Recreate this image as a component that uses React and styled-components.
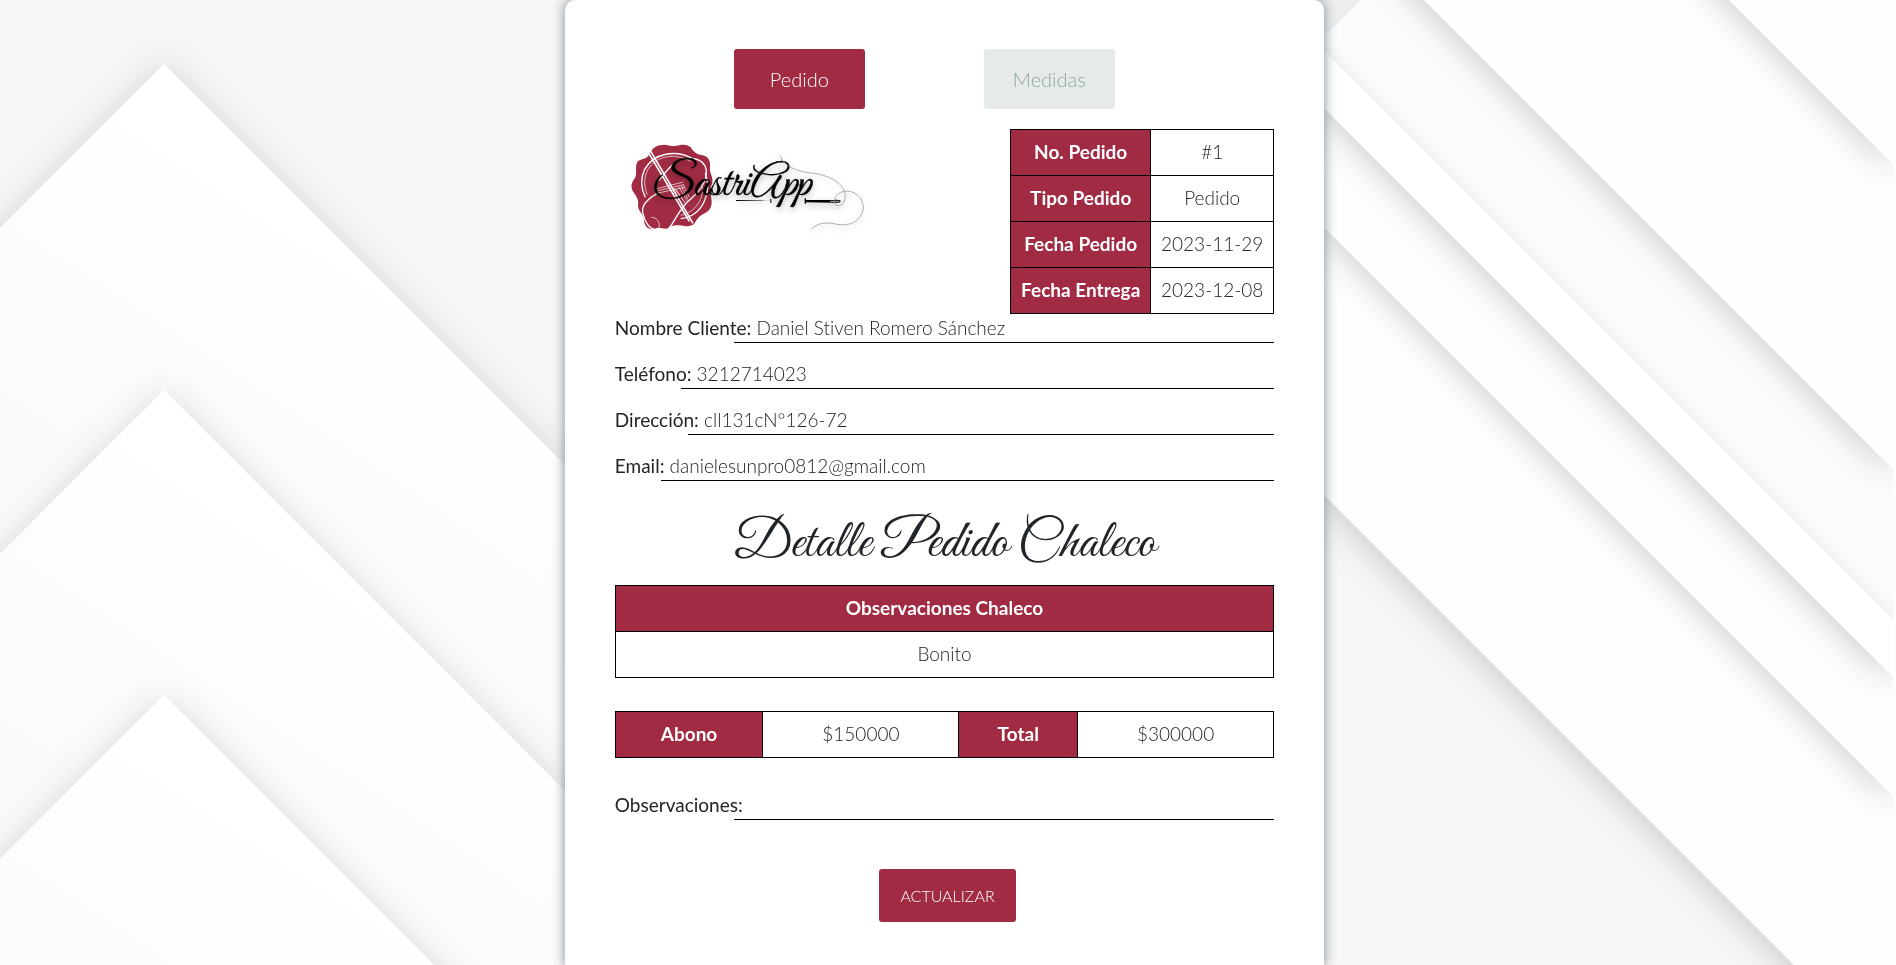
import React from "react";
import styled, { createGlobalStyle } from "styled-components";

const wine = "#a02b42";
const sans = `Lato, "Liberation Sans", sans-serif`;
const script = `"Great Vibes", "Petit Formal Script", cursive`;

const GlobalStyle = createGlobalStyle`
  *, *::before, *::after { box-sizing: border-box; }
  body {
    margin: 0;
    background: #f6f6f6;
    color: #212529;
    font: 300 19px/27px ${sans};
    font-variant-ligatures: none;
  }
`;

const Page = styled.div`
  min-height: 100vh;
  display: flex;
  justify-content: center;
  padding-right: 7px;
`;

const Backdrop = styled.svg`
  position: fixed;
  inset: 0;
  width: 100%;
  height: 100%;
  z-index: -1;
`;

const Card = styled.main`
  width: 40.2%;
  min-width: 600px;
  padding: 49px 50px 42px;
  background: #fff;
  border-radius: 10px 10px 0 0;
  box-shadow: 0 0 12px 1px #8e979f;
`;

const Tabs = styled.nav`
  display: flex;
  gap: 119px;
  padding-left: 119px;
  margin-bottom: 20px;
`;

const Tab = styled.button`
  width: 131px;
  height: 60px;
  border: 0;
  border-radius: 3px;
  font: 300 20px/29px ${sans};
  color: ${(p) => (p.$active ? "#fff" : "#8fa5a4")};
  background: ${(p) => (p.$active ? wine : "#e6eae9")};
`;

const Header = styled.header`
  display: flex;
  justify-content: space-between;
  align-items: flex-start;
`;

const Logo = styled.svg`
  width: 250px;
  height: 110px;
`;

const Table = styled.table`
  width: ${(p) => p.$width || "100%"};
  margin-bottom: ${(p) => p.$gap || "0"};
  border-collapse: collapse;
  table-layout: fixed;
  text-align: center;
`;

const HeadCell = styled.th`
  width: ${(p) => p.$width || "auto"};
  padding: 8px 0 10px;
  border: 1px solid #000;
  background: ${wine};
  color: #fff;
  font-weight: 700;
`;

const Cell = styled.td`
  width: ${(p) => p.$width || "auto"};
  padding: 8px 0 10px;
  border: 1px solid #000;
`;

const Field = styled.div`
  display: grid;
  grid-template-columns: ${(p) => p.$start} 1fr;
  height: 29px;
  margin-bottom: 17px;
`;

const FieldText = styled.div`
  grid-area: 1 / 1 / 2 / 3;
`;

const FieldName = styled.span`
  font-weight: 400;
`;

const Rule = styled.div`
  grid-area: 1 / 2 / 2 / 3;
  border-bottom: 1px solid #000;
`;

const Title = styled.h1`
  margin: 0;
  padding: 22px 0 17px;
  font: 400 54px/48px ${script};
  text-align: center;
  white-space: nowrap;
`;

const Actions = styled.div`
  display: flex;
  justify-content: center;
  padding: 32px 0 0 6px;
`;

const Submit = styled.button`
  width: 137px;
  height: 53px;
  border: 0;
  border-radius: 3px;
  background: ${wine};
  color: #fff;
  font: 300 16px/24px ${sans};
  text-transform: uppercase;
`;

const order = [
  ["No. Pedido", "#1"],
  ["Tipo Pedido", "Pedido"],
  ["Fecha Pedido", "2023-11-29"],
  ["Fecha Entrega", "2023-12-08"],
];

const customer = [
  ["Nombre Cliente:", "Daniel Stiven Romero Sánchez", "119px"],
  ["Teléfono:", "3212714023", "66px"],
  ["Dirección:", "cll131cN°126-72", "73px"],
  ["Email:", "danielesunpro0812@gmail.com", "46px"],
];

function FieldRow({ name, value, start }) {
  return (
    <Field $start={start}>
      <FieldText>
        <FieldName>{name}</FieldName> {value}
      </FieldText>
      <Rule />
    </Field>
  );
}

function PaperBackdrop() {
  return (
    <Backdrop viewBox="0 0 1896 965" preserveAspectRatio="xMidYMin slice" aria-hidden="true">
      <defs>
        <filter id="soft" x="-20%" y="-20%" width="140%" height="140%">
          <feDropShadow dx="0" dy="0" stdDeviation="17" floodColor="#000" floodOpacity="0.13" />
        </filter>
        <filter id="faint" x="-20%" y="-20%" width="140%" height="140%">
          <feDropShadow dx="3" dy="-3" stdDeviation="8" floodColor="#000" floodOpacity="0.06" />
        </filter>
        <filter id="deep" x="-20%" y="-20%" width="140%" height="140%">
          <feDropShadow dx="-3" dy="3" stdDeviation="17" floodColor="#000" floodOpacity="0.19" />
        </filter>
        <linearGradient id="sheet" gradientUnits="userSpaceOnUse" x1="300" y1="200" x2="100" y2="500">
          <stop offset="0" stopColor="#fff" />
          <stop offset="1" stopColor="#fafafa" />
        </linearGradient>
      </defs>
      <rect width="1896" height="965" fill="#f6f6f6" />
      {[64, 390, 695].map((y) => (
        <g key={y} transform={`translate(0 ${y - 64})`}>
          <path d="M164 64 L1164 1064 L-836 1064 Z" fill="url(#sheet)" filter="url(#soft)" />
        </g>
      ))}
      <rect x="944" width="952" height="965" fill="#f6f6f6" />
      <path d="M944 115 L1896 1067 V-200 H944 Z" fill="#fefefe" filter="url(#deep)" />
      <path d="M944 -153 L1896 799 V-200 H944 Z" fill="#fefefe" filter="url(#deep)" />
      <path d="M944 -272 L1896 680 V-300 H944 Z" fill="#fcfcfc" filter="url(#deep)" />
      <path d="M944 -273 L1896 679 V623 L944 -329 Z" fill="#fff" filter="url(#faint)" />
      <path d="M1361 0 H1200 V161 Z" fill="#eceeef" />
      <path d="M944 -480 L1896 472 V-500 H944 Z" fill="#fefefe" filter="url(#deep)" />
      <path d="M944 -785 L1896 167 V-800 H944 Z" fill="#fefefe" filter="url(#deep)" />
      <rect x="1893" width="3" height="965" fill="#fdfdfd" />
    </Backdrop>
  );
}

function SastriLogo() {
  return (
    <Logo viewBox="45 27 750 330" role="img" aria-label="SastriApp">
      <defs>
        <filter id="glow" x="-20%" y="-40%" width="140%" height="190%">
          <feDropShadow dx="0" dy="8" stdDeviation="9" floodColor="#000" floodOpacity="0.3" />
        </filter>
      </defs>
      <path
        fill={wine}
        d="M180 76 C200 70 210 80 226 78 C244 74 262 70 274 84 C282 98 294 104 308 106 C326 110 332 124 330 144 C328 160 342 172 336 192 C328 206 332 218 334 236 C338 258 330 272 314 280 C298 288 292 296 284 310 C270 324 254 318 238 316 C222 314 212 318 200 326 C180 326 176 320 160 328 C142 328 134 318 132 302 C134 284 116 278 114 258 C118 238 108 228 98 212 C90 196 98 184 106 172 C112 158 104 142 112 126 C120 116 138 120 146 106 C154 92 160 80 180 76 Z"
      />
      <g fill="none" stroke="#fff">
        <path strokeWidth="4" d="M278 116 C228 88 162 98 134 148 C120 178 122 204 136 232" />
        <path strokeWidth="2" d="M272 124 C226 98 170 106 144 148 C130 174 132 200 142 224" />
        <path strokeWidth="4" d="M316 160 C336 216 310 288 242 296" />
        <path strokeWidth="2" d="M306 190 C314 236 288 276 242 286" />
        <path strokeWidth="4" d="M176 182 C200 152 224 122 244 118 C270 112 308 112 318 146 C326 188 290 222 262 246 C238 270 226 300 208 324" />
        <path strokeWidth="4" d="M176 218 C146 234 124 252 128 278 C134 306 148 326 164 328" />
        <path strokeWidth="2" d="M154 292 C172 292 182 308 176 326" />
        <path strokeWidth="2" d="M164 208 L250 186 M166 214 L252 194 M170 220 L254 202 M236 200 L262 244 M244 198 L264 238 M250 194 L268 232 M228 208 L256 250 M222 204 L252 244" />
        <path strokeWidth="5" d="M143 94 L268 304 M151 92 L279 310" />
      </g>
      <g filter="url(#glow)">
        <text x="156" y="226" fontFamily={script} fontSize="135" fill="#000" stroke="#000" strokeWidth="1">SastriApp</text>
        <path d="M408 240 L512 242 L408 243 Z M511 236 h3 v13 h-3 Z M614 235 h4 v16 h-4 Z" fill="#000" />
        <path d="M617 240 L700 240 Q722 238 722 244 Q720 250 700 248 L617 247 Z" fill="#000" />
        <path d="M690 244 H717" stroke="#fff" strokeWidth="2" />
        <path
          d="M541 106 C550 140 590 154 640 160 C690 166 732 190 736 226 C736 248 724 262 708 256 C698 246 704 222 730 214 C760 208 792 232 790 266 C784 300 752 322 706 312 C670 304 650 312 634 328"
          fill="none"
          stroke="#888"
          strokeWidth="2"
        />
      </g>
    </Logo>
  );
}

export default function App() {
  return (
    <>
      <GlobalStyle />
      <PaperBackdrop />
      <Page>
        <Card>
          <Tabs>
            <Tab type="button" $active>Pedido</Tab>
            <Tab type="button">Medidas</Tab>
          </Tabs>
          <Header>
            <SastriLogo />
            <Table $width="264px">
              <tbody>
                {order.map(([name, value]) => (
                  <tr key={name}>
                    <HeadCell scope="row" $width="140px">{name}</HeadCell>
                    <Cell>{value}</Cell>
                  </tr>
                ))}
              </tbody>
            </Table>
          </Header>
          {customer.map(([name, value, start]) => (
            <FieldRow key={name} name={name} value={value} start={start} />
          ))}
          <Title>Detalle Pedido Chaleco</Title>
          <Table $gap="33px">
            <thead>
              <tr><HeadCell scope="col">Observaciones Chaleco</HeadCell></tr>
            </thead>
            <tbody>
              <tr><Cell>Bonito</Cell></tr>
            </tbody>
          </Table>
          <Table $gap="33px">
            <tbody>
              <tr>
                <HeadCell scope="row" $width="22.4%">Abono</HeadCell>
                <Cell>$150000</Cell>
                <HeadCell scope="row" $width="18%">Total</HeadCell>
                <Cell>$300000</Cell>
              </tr>
            </tbody>
          </Table>
          <FieldRow name="Observaciones:" value="" start="119px" />
          <Actions>
            <Submit type="button">Actualizar</Submit>
          </Actions>
        </Card>
      </Page>
    </>
  );
}
